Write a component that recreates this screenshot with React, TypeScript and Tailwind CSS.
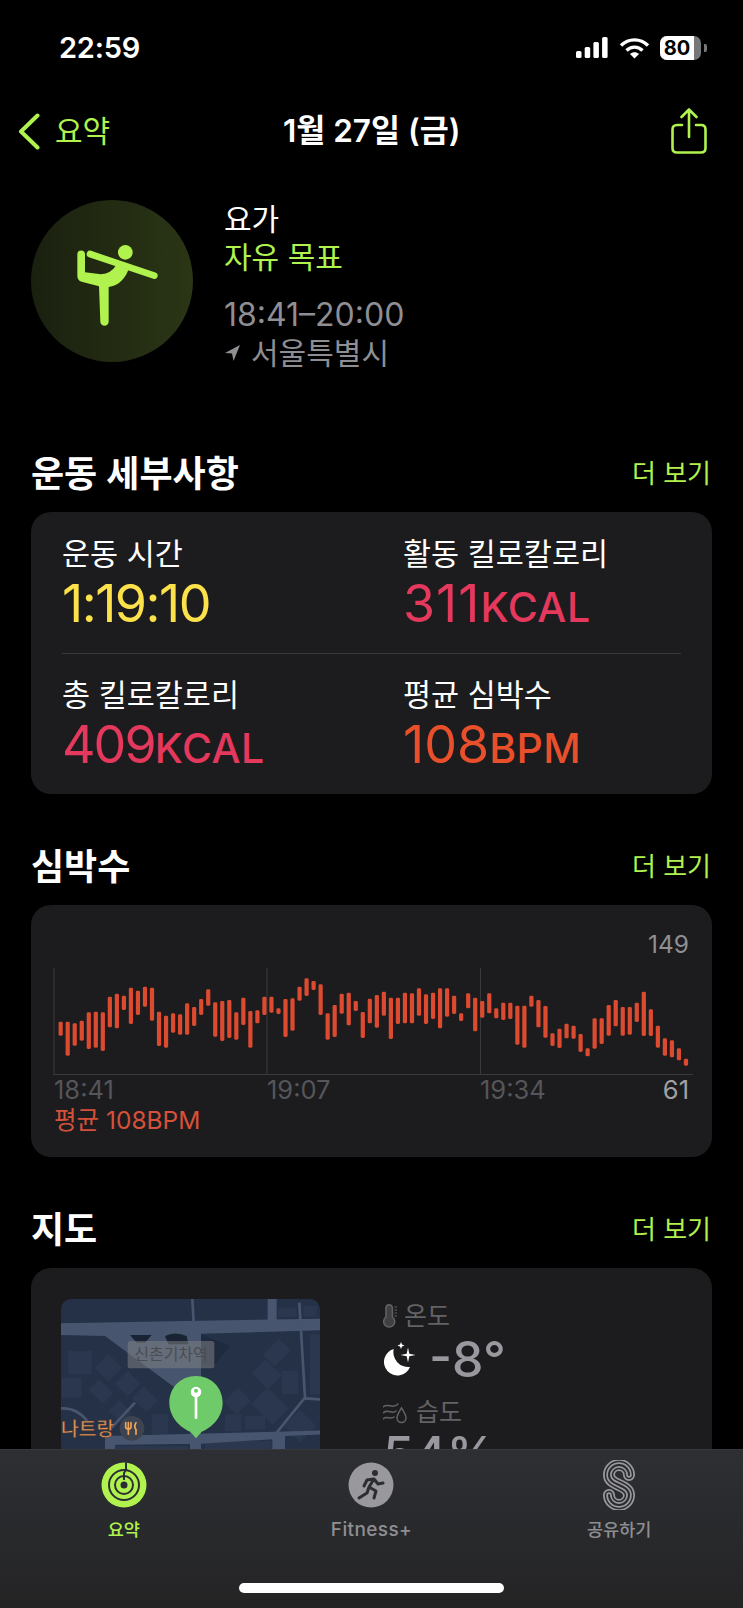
import React from "react";

const LIME = "#b0f24e";

const bars: [number, number][] = [
  [185,227],[185,287],[190,257],[182,242],[157,267],[155,263],[157,273],[110,202],[101,205],[107,150],
  [83,192],[92,165],[80,140],[83,182],[155,258],[167,263],[160,218],[163,224],[130,224],[141,198],
  [117,165],[88,137],[127,230],[123,243],[120,234],[157,239],[113,195],[153,263],[151,190],[110,165],
  [110,158],[145,162],[117,231],[115,212],[80,122],[55,108],[63,90],[73,165],[160,239],[135,231],
  [101,161],[98,196],[123,153],[156,234],[116,190],[105,203],[95,167],[113,237],[113,192],[98,190],
  [100,190],[85,167],[103,192],[98,177],[85,205],[85,170],[107,162],[160,183],[100,145],[113,214],
  [123,173],[100,160],[145,175],[128,180],[128,177],[137,254],[137,263],[107,140],[120,202],[138,233],
  [220,258],[206,264],[191,235],[197,236],[222,276],[265,289],[175,266],[175,252],[135,227],[120,199],
  [141,227],[141,224],[128,186],[95,228],[148,228],[197,263],[235,287],[241,292],[265,301],[296,317],
];

function StatusBar() {
  return (
    <div className="flex h-[95px] items-center justify-between pl-[59px] pr-[36px] text-white">
      <span className="text-[29px] font-semibold leading-none tracking-[-0.2px]">22:59</span>
      <div className="flex items-center">
        <svg width="32" height="21" viewBox="0 0 32 21" fill="#fff">
          <rect x="0" y="14" width="5.5" height="7" rx="1.5" />
          <rect x="8.7" y="10" width="5.5" height="11" rx="1.5" />
          <rect x="17.4" y="5" width="5.5" height="16" rx="1.5" />
          <rect x="26.1" y="0" width="5.5" height="21" rx="1.5" />
        </svg>
        <svg className="ml-[11px]" width="31" height="22" viewBox="0 0 31 22" fill="none" stroke="#fff" strokeWidth="3.4">
          <path d="M2 8.5 C9.5 1 21.5 1 29 8.5" />
          <path d="M7.5 13.5 C12 9 19 9 23.5 13.5" />
          <path d="M15.5 21.5 L11 17 C13.5 14.8 17.5 14.8 20 17 Z" fill="#fff" stroke="none" />
        </svg>
        <div className="relative ml-[10px] flex h-[24px] w-[41px] items-center overflow-hidden rounded-[7px] bg-[#77777a]">
          <div className="flex h-full w-[34px] items-center justify-center bg-white text-[20px] font-bold leading-none text-black">80</div>
        </div>
        <div className="ml-[3px] h-[8px] w-[3px] rounded-r-[2px] bg-[#77777a]" />
      </div>
    </div>
  );
}

function NavBar() {
  return (
    <div className="relative flex h-[72px] items-center justify-between pl-[18px] pr-[36px]">
      <div className="flex items-center">
        <svg width="22" height="37" viewBox="0 0 22 37" fill="none" stroke={LIME} strokeWidth="4" strokeLinecap="round" strokeLinejoin="round">
          <path d="M19.5 2.5 L3 18.5 L19.5 34.5" />
        </svg>
        <span className="ml-[15px] text-[30px] leading-none" style={{ color: LIME }}>요약</span>
      </div>
      <span className="absolute left-[283px] top-[17px] text-[31.5px] font-semibold leading-[38px] text-white">1월 27일 (금)</span>
      <svg width="36" height="46" viewBox="0 0 36 46" fill="none" stroke={LIME} strokeWidth="2.6" strokeLinecap="round" strokeLinejoin="round">
        <path d="M11 17 H6 Q1.5 17 1.5 21.5 V40 Q1.5 44.5 6 44.5 H30 Q34.5 44.5 34.5 40 V21.5 Q34.5 17 30 17 H25" />
        <path d="M18 29 V2 M10.5 9 L18 1.5 L25.5 9" />
      </svg>
    </div>
  );
}

function Hero() {
  return (
    <div className="mt-[33px] flex h-[174px] pl-[31px]">
      <div className="h-[162px] w-[162px] rounded-full bg-linear-to-r from-[#1a200f] to-[#2b3615]">
        <svg width="162" height="162" viewBox="-102 -105 486 486">
          <circle cx="181" cy="52" r="22" fill={LIME} />
          <path d="M75 57 L268 122" stroke={LIME} strokeWidth="20" strokeLinecap="round" fill="none" />
          <path fill={LIME} d="M37 58 a11 11 0 0 1 23 0 L60 112 L108 118 Q138 116 154 90 L190 105 Q172 150 131 156 L131 260 a12.500 12.500 0 0 1 -25 0 L102 154 L50 140 Q37 136 37 122 Z" />
        </svg>
      </div>
      <div className="ml-[31px] text-[30px]">
        <div className="leading-[38px] text-white">요가</div>
        <div className="leading-[38px]" style={{ color: LIME }}>자유 목표</div>
        <div className="mt-[20px] text-[32px] leading-[38px] text-[#8e8e93]">18:41–20:00</div>
        <div className="flex items-center leading-[38px] text-[#8e8e93]">
          <svg className="ml-px" width="15" height="16" viewBox="0 0 15 16" fill="#8e8e93">
            <path d="M15 0 L0 8 L7 8.500 L8.500 16 Z" />
          </svg>
          <span className="ml-[11px]">서울특별시</span>
        </div>
      </div>
    </div>
  );
}

function SectionHead({ title, top }: { title: string; top: string }) {
  return (
    <div className={`${top} mb-[18px] flex h-[40px] items-center justify-between pl-[31px] pr-[32px]`}>
      <span className="text-[36px] font-semibold leading-none text-white">{title}</span>
      <span className="text-[26px] leading-none" style={{ color: LIME }}>더 보기</span>
    </div>
  );
}

function Metric({ label, value, unit, color, spacing }: { label: string; value: string; unit?: string; color: string; spacing: string }) {
  return (
    <div>
      <div className="text-[30.5px] leading-[34px] text-white">{label}</div>
      <div className="mt-[4px] flex items-baseline leading-[58px]" style={{ color }}>
        <span className={`text-[52px] ${spacing}`}>{value}</span>
        {unit && <span className="text-[41px] font-medium tracking-[0.5px]">{unit}</span>}
      </div>
    </div>
  );
}

function Details() {
  return (
    <div className="mx-[31px] h-[282px] rounded-[20px] bg-[#1c1c1e]">
      <div className="grid h-[141px] grid-cols-[341px_1fr] pl-[31px] pt-[25px]">
        <Metric label="운동 시간" value="1:19:10" color="#fce14b" spacing="tracking-[-1.5px]" />
        <Metric label="활동 킬로칼로리" value="311" unit="KCAL" color="#e4385c" spacing="tracking-[1px]" />
      </div>
      <div className="mx-[31px] border-t border-[#38383a]" />
      <div className="grid h-[140px] grid-cols-[341px_1fr] pl-[31px] pt-[24px]">
        <Metric label="총 킬로칼로리" value="409" unit="KCAL" color="#e4385c" spacing="tracking-[-2px]" />
        <Metric label="평균 심박수" value="108" unit="BPM" color="#ea4f2c" spacing="tracking-[0px]" />
      </div>
    </div>
  );
}

function HeartChart() {
  return (
    <div className="mx-[31px] h-[252px] rounded-[20px] bg-[#1c1c1e] pl-[22px] pt-[27px]">
      <div className="w-[636px] text-right text-[24.5px] leading-[24px] text-[#8e8e93]">149</div>
      <svg className="mt-[12px] block" width="640" height="107" viewBox="0 0 640 107">
        {[0.5, 213.5, 427].map((x) => (
          <rect key={x} x={x} y="0" width="1" height="107" fill="#3a3a3c" />
        ))}
        <rect x="0" y="106" width="640" height="1" fill="#3a3a3c" />
        {bars.map(([t, b], i) => (
          <rect
            key={i}
            x={7.67 + i * 7.026 - 2.1}
            y={t / 3 - 8}
            width="4.2"
            height={(b - t) / 3}
            rx="1.4"
            fill="#dc4b30"
          />
        ))}
      </svg>
      <div className="mt-[3px] grid w-[636px] grid-cols-[213px_213px_1fr] text-[25.5px] leading-[24px] text-[#55555a]">
        <span className="pl-px">18:41</span>
        <span className="pl-px">19:07</span>
        <div className="flex justify-between pl-px">
          <span>19:34</span>
          <span className="text-[#a0a0a5]">61</span>
        </div>
      </div>
      <div className="mt-[6px] pl-px text-[24.5px] leading-[24px] text-[#d6503a]">평균 108BPM</div>
    </div>
  );
}

function MapThumb() {
  const road = "#47556f";
  const bld = "#2a374e";
  return (
    <svg className="block shrink-0 rounded-[10px]" width="259" height="200" viewBox="18 24 777 600">
      <rect x="18" y="24" width="777" height="600" fill="#243147" />
      {/* buildings */}
      <g fill={bld}>
        <rect x="40" y="180" width="70" height="70" />
        <rect x="20" y="260" width="60" height="60" />
        <rect x="130" y="200" width="60" height="60" transform="rotate(45 160 230)" />
        <rect x="190" y="250" width="55" height="55" transform="rotate(45 218 278)" />
        <rect x="110" y="280" width="60" height="45" transform="rotate(45 140 300)" />
        <rect x="240" y="300" width="60" height="50" transform="rotate(45 270 325)" />
        <rect x="170" y="340" width="55" height="45" transform="rotate(45 197 362)" />
        <rect x="290" y="370" width="50" height="60" />
        <rect x="520" y="300" width="55" height="60" transform="rotate(45 547 330)" />
        <rect x="600" y="220" width="70" height="60" transform="rotate(45 635 250)" />
        <rect x="640" y="150" width="50" height="70" transform="rotate(45 665 185)" />
        <rect x="600" y="310" width="90" height="70" transform="rotate(45 645 345)" />
        <rect x="510" y="370" width="50" height="50" />
        <rect x="570" y="375" width="60" height="40" />
        <rect x="680" y="240" width="50" height="70" />
        <rect x="765" y="130" width="30" height="180" />
        <rect x="700" y="370" width="70" height="70" transform="rotate(45 735 405)" />
        <rect x="670" y="50" width="55" height="28" />
        <rect x="745" y="45" width="40" height="32" />
        <rect x="180" y="465" width="220" height="60" />
        <rect x="450" y="450" width="200" height="60" />
      </g>
      {/* roads */}
      <g fill={road}>
        <path d="M18 97 L795 83 L795 118 L438 128 L438 480 L405 480 L405 400 L360 290 L150 135 L18 132 Z" />
        <rect x="638" y="24" width="27" height="70" />
        <path d="M150 435 L660 422 L800 418 L800 430 L690 435 L690 480 L652 480 L652 445 L438 458 L150 462 Z" />
        <rect x="150" y="435" width="30" height="50" />
      </g>
      <g fill="none" stroke={road} strokeWidth="8">
        <path d="M412 24 L416 95" />
        <path d="M733 35 L750 320 L665 425" />
        <path d="M750 322 L795 325" />
        <path d="M18 352 Q70 350 100 395" />
        <path d="M240 335 L170 410" />
      </g>
      <path d="M225 132 H290 L270 155 H245 Z M330 135 Q360 120 395 135 L400 160 H340 Z" fill="#1a2333" />
      <path d="M438 130 L525 165 L470 230 L438 220 Z" fill="#1e2a3e" />
      {/* station label */}
      <rect x="218" y="150" width="260" height="82" rx="8" fill="#7d7f84" fillOpacity="0.55" />
      <text x="348" y="207" textAnchor="middle" fontSize="48" fill="#4a4c52">신촌기차역</text>
      {/* restaurant */}
      <text x="18" y="434" fontSize="58" fontWeight="500" fill="#e8955a" stroke="#4c3a2c" strokeWidth="1.500">나트랑</text>
      <circle cx="231" cy="412" r="37" fill="#3d434f" />
      <g stroke="#f0a45a" strokeWidth="5" strokeLinecap="round" fill="none">
        <path d="M220 395 V430 M212 395 V408 Q212 414 220 414 Q228 414 228 408 V395" />
        <path d="M243 395 Q236 408 243 416 V430" />
      </g>
      {/* pin */}
      <path d="M423 255 C469 255 503 290 503 335 C503 378 470 410 440 422 L423 442 L406 422 C376 410 343 378 343 335 C343 290 377 255 423 255 Z" fill="#6fca6a" />
      <path d="M423 380 V315" stroke="#fff" strokeWidth="8" strokeLinecap="round" />
      <circle cx="423" cy="303" r="16" fill="#fff" />
      <circle cx="423" cy="299" r="6" fill="#6fca6a" />
    </svg>
  );
}

function Weather() {
  return (
    <div className="ml-[63px] pt-[5px]">
      <div className="flex h-[24px] items-center text-[25px] leading-none text-[#636366]">
        <svg width="15" height="24" viewBox="0 0 15 24" fill="none" stroke="#636366" strokeWidth="1.500">
          <path d="M3 13 V4 a3.200 3.200 0 0 1 6.400 0 V13 a5.500 5.500 0 1 1 -6.400 0 Z" fill="#636366" fillOpacity="0.5" />
          <path d="M11.500 3 H14 M11.500 6 H14 M11.500 9 H14 M11.500 12 H14" strokeWidth="1" />
        </svg>
        <span className="ml-[6px]">온도</span>
      </div>
      <div className="mt-[2px] flex h-[58px] items-center">
        <svg width="33" height="34" viewBox="0 0 33 34" fill="#fff">
          <path d="M10.700 7 A13.500 13.500 0 1 0 27 25 A15 15 0 0 1 10.700 7 Z" />
          <path d="M18 0 L19 2.500 L21.500 3.500 L19 4.500 L18 7 L17 4.500 L14.500 3.500 L17 2.500 Z" />
          <path d="M25 5.500 L26.300 11.700 L32.500 13 L26.300 14.300 L25 20.500 L23.700 14.300 L17.500 13 L23.700 11.700 Z" />
        </svg>
        <span className="ml-[13px] text-[50px] font-medium leading-none text-[#98989e]">-8°</span>
      </div>
      <div className="mt-[12px] flex h-[24px] items-center text-[25px] leading-none text-[#636366]">
        <svg width="24" height="24" viewBox="0 0 24 24" fill="none" stroke="#636366" strokeWidth="1.500" strokeLinecap="round">
          <path d="M0 7 C5 2 9 10 15 4 M0 13 C5 8 9 15 13 11 M0 19 C4 15 7 20 11 17" />
          <path d="M18.500 8 C21 12 23 15 23 18 a4.500 4.500 0 0 1 -9 0 C14 15 16 12 18.500 8 Z" />
        </svg>
        <span className="ml-[9px]">습도</span>
      </div>
      <div className="mt-[5px] text-[50px] font-medium leading-none text-[#98989e]">54%</div>
    </div>
  );
}

function TabBar() {
  return (
    <div className="absolute bottom-0 left-0 right-0 h-[159px] border-t border-[#36383c] bg-linear-to-b from-[#2d2f33] to-[#242425]">
      <div className="grid grid-cols-3 pt-[10px] text-center text-[17.5px] font-medium leading-[18px]">
        <div className="flex flex-col items-center">
          <svg width="50" height="50" viewBox="0 0 50 50">
            <circle cx="25" cy="25" r="22.500" fill={LIME} />
            <circle cx="25" cy="25" r="15" fill="none" stroke="#2b2e33" strokeWidth="2" />
            <circle cx="25" cy="25" r="9" fill="none" stroke="#2b2e33" strokeWidth="2" />
            <circle cx="25" cy="25" r="3.500" fill="#2b2e33" />
            <path d="M27 2.500 L27 10 L25 13 L25 20" stroke="#2b2e33" strokeWidth="2" fill="none" />
          </svg>
          <span className="mt-[11px]" style={{ color: LIME }}>요약</span>
        </div>
        <div className="flex flex-col items-center text-[#8e8e93]">
          <svg width="50" height="50" viewBox="0 0 50 50">
            <circle cx="25" cy="25" r="22.500" fill="#98989d" />
            <circle cx="29" cy="13" r="3" fill="#2b2d30" />
            <path d="M28 19 L23 27 L30 31 L28 38 M23 27 L21 33 L13 38 M28 19 L21 20 L18 26 M28 19 L32 24 L37 23" fill="none" stroke="#2b2d30" strokeWidth="3" strokeLinecap="round" strokeLinejoin="round" />
          </svg>
          <span className="mt-[11px] text-[19px] tracking-[0.4px]">Fitness+</span>
        </div>
        <div className="flex flex-col items-center text-[#8e8e93]">
          <svg width="50" height="50" viewBox="0 0 50 50" fill="none" strokeLinecap="round" strokeLinejoin="round">
            <path d="M35 15 A10 10 0 0 0 15 15 C15 26 35 24 35 35 A10 10 0 0 1 15 35" stroke="#98989d" strokeWidth="12" />
            <path d="M35 15 A10 10 0 0 0 15 15 C15 26 35 24 35 35 A10 10 0 0 1 15 35" stroke="#2a2b2e" strokeWidth="8.500" />
            <path d="M35 15 A10 10 0 0 0 15 15 C15 26 35 24 35 35 A10 10 0 0 1 15 35" stroke="#98989d" strokeWidth="5.500" />
            <path d="M35 15 A10 10 0 0 0 15 15 C15 26 35 24 35 35 A10 10 0 0 1 15 35" stroke="#2a2b2e" strokeWidth="2" />
          </svg>
          <span className="mt-[11px]">공유하기</span>
        </div>
      </div>
      <div className="mx-auto mt-[44px] h-[10px] w-[265px] rounded-full bg-white" />
    </div>
  );
}

export default function App() {
  return (
    <div className="relative h-[1608px] w-[743px] overflow-hidden bg-black font-[Inter,'Noto_Sans_CJK_KR',sans-serif]">
      <StatusBar />
      <NavBar />
      <Hero />
      <SectionHead title="운동 세부사항" top="mt-[80px]" />
      <Details />
      <SectionHead title="심박수" top="mt-[53px]" />
      <HeartChart />
      <SectionHead title="지도" top="mt-[53px]" />
      <div className="mx-[31px] flex h-[400px] rounded-[20px] bg-[#1c1c1e] pl-[30px] pt-[31px]">
        <MapThumb />
        <Weather />
      </div>
      <TabBar />
    </div>
  );
}
